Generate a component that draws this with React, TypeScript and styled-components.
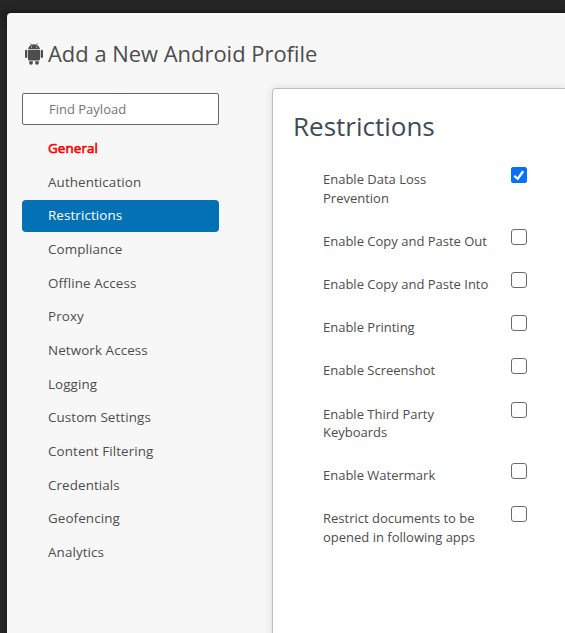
import React, { useState } from 'react';
import styled, { createGlobalStyle, css } from 'styled-components';

const GlobalStyle = createGlobalStyle`
  * { box-sizing: border-box; }
  html, body { margin: 0; height: 100%; overflow: hidden; }
  body {
    background: #242524;
    color: #4d4d4d;
    font-family: 'Open Sans', sans-serif;
    font-size: 13px;
  }
`;

const Backdrop = styled.div`
  height: 633px;
  padding: 13px 0 0 7px;
  background: linear-gradient(#242726 0, #242424 9px, #202020 13px, #262626 30px, #262626 100%);
`;

const Dialog = styled.main`
  height: 620px;
  padding: 26px 0 0 15px;
  background: #f7f7f7;
  border-top-left-radius: 4px;
  box-shadow: 0 0 5px rgba(0, 0, 0, 0.45);
`;

const Header = styled.header`
  display: flex;
  align-items: center;
  height: 30px;
`;

const AndroidIcon = styled.svg`
  width: 18px;
  height: 22px;
  margin: 0 5px 0 3px;
  fill: #4d4d4d;
`;

const Title = styled.h1`
  margin: 0;
  font-size: 21.93px;
  font-weight: 400;
  line-height: 30px;
  white-space: nowrap;
`;

const Content = styled.div`
  display: flex;
  align-items: flex-start;
  gap: 53px;
  margin-top: 19px;
`;

const Sidebar = styled.aside`
  width: 197px;
  flex: none;
  padding-top: 5px;
`;

const Search = styled.input`
  display: block;
  width: 100%;
  height: 32px;
  padding: 0 26px;
  border: 1px solid #666;
  border-radius: 2px;
  background: #fff;
  color: #4d4d4d;
  font: 13px 'Open Sans', sans-serif;
  outline: none;
  &::placeholder { color: #757575; opacity: 1; }
`;

const Nav = styled.nav`
  display: flex;
  flex-direction: column;
  gap: 1.67px;
  margin-top: 8px;
`;

const NavItem = styled.button<{ $tone?: 'required' | 'active' }>`
  height: 32px;
  padding: 0 26px 1px;
  border: 0;
  border-radius: 4px;
  background: transparent;
  color: #4d4d4d;
  font: 13.4px/31px 'Open Sans', sans-serif;
  letter-spacing: 0.1px;
  text-align: left;
  white-space: nowrap;
  ${({ $tone }) => $tone === 'required' && css`
    color: #f00;
    -webkit-text-stroke: 0.6px #f00;
  `}
  ${({ $tone }) => $tone === 'active' && css`
    background: #0471b4;
    color: #fff;
  `}
`;

const Panel = styled.section`
  flex: 1;
  height: 560px;
  padding: 19px 0 0 20px;
  background: #fff;
  border: 1px solid #bfbfbf;
  border-right: 0;
  border-top-left-radius: 4px;
  box-shadow: 0 0 10px rgba(0, 0, 0, 0.12);
`;

const PanelTitle = styled.h2`
  margin: 0;
  color: #3f4a56;
  font-size: 26px;
  font-weight: 400;
  line-height: 36px;
`;

const Options = styled.div`
  display: flex;
  flex-direction: column;
  gap: 24.64px;
  margin: 26.4px 0 0 30px;
`;

const Option = styled.label`
  display: grid;
  grid-template-columns: 188px 16px;
  align-items: start;
  line-height: 18.5px;
`;

const OptionText = styled.span`
  white-space: pre-line;
`;

const Checkbox = styled.input`
  appearance: none;
  display: grid;
  place-content: center;
  width: 16px;
  height: 16px;
  margin: -3px 0 0;
  border: 1px solid #6b6b6b;
  border-radius: 3px;
  background: #fff;
  &:checked {
    background: #0870ff;
    border-color: #0870ff;
    border-radius: 2px;
  }
  &:checked::before {
    content: '';
    width: 12px;
    height: 12px;
    background: #fff;
    clip-path: polygon(4% 59%, 18% 47%, 37% 66%, 76% 10%, 93% 21%, 41% 93%);
  }
`;

const payloads: { name: string; tone?: 'required' | 'active' }[] = [
  { name: 'General', tone: 'required' },
  { name: 'Authentication' },
  { name: 'Restrictions', tone: 'active' },
  { name: 'Compliance' },
  { name: 'Offline Access' },
  { name: 'Proxy' },
  { name: 'Network Access' },
  { name: 'Logging' },
  { name: 'Custom Settings' },
  { name: 'Content Filtering' },
  { name: 'Credentials' },
  { name: 'Geofencing' },
  { name: 'Analytics' },
];

const restrictions = [
  'Enable Data Loss\nPrevention',
  'Enable Copy and Paste Out',
  'Enable Copy and Paste Into',
  'Enable Printing',
  'Enable Screenshot',
  'Enable Third Party\nKeyboards',
  'Enable Watermark',
  'Restrict documents to be\nopened in following apps',
];

export default function App() {
  const [enabled, setEnabled] = useState<boolean[]>(restrictions.map((_, i) => i === 0));
  const toggle = (index: number) =>
    setEnabled(values => values.map((value, i) => (i === index ? !value : value)));

  return (
    <>
      <GlobalStyle />
      <Backdrop>
        <Dialog>
          <Header>
            <AndroidIcon viewBox="0 0 18 22" aria-hidden="true">
              <path fillRule="evenodd" d="M3.2 6C3.4 3.9 4.5 2.6 6.1 1.9L5.2.3l.5-.2.9 1.6a7 7 0 0 1 4.8 0l.9-1.6.5.2-.9 1.6c1.6.7 2.7 2 2.9 4.1ZM6 3.5v1h1v-1Zm5 0v1h1v-1Z" />
              <path d="M3 6.7h12v9.2q0 1.5-1.5 1.5h-9Q3 17.4 3 15.9Z" />
              <rect y="6.8" width="2.3" height="8.3" rx="1.15" />
              <rect x="15.7" y="6.8" width="2.3" height="8.3" rx="1.15" />
              <path d="M4.2 18.2h3.6v1.9q0 1.7-1.8 1.7t-1.8-1.7ZM10.2 18.2h3.6v1.9q0 1.7-1.8 1.7t-1.8-1.7Z" />
            </AndroidIcon>
            <Title>Add a New Android Profile</Title>
          </Header>
          <Content>
            <Sidebar>
              <Search placeholder="Find Payload" aria-label="Find Payload" />
              <Nav>
                {payloads.map(({ name, tone }) => (
                  <NavItem key={name} $tone={tone}>{name}</NavItem>
                ))}
              </Nav>
            </Sidebar>
            <Panel>
              <PanelTitle>Restrictions</PanelTitle>
              <Options>
                {restrictions.map((text, index) => (
                  <Option key={text}>
                    <OptionText>{text}</OptionText>
                    <Checkbox type="checkbox" checked={enabled[index]} onChange={() => toggle(index)} />
                  </Option>
                ))}
              </Options>
            </Panel>
          </Content>
        </Dialog>
      </Backdrop>
    </>
  );
}
